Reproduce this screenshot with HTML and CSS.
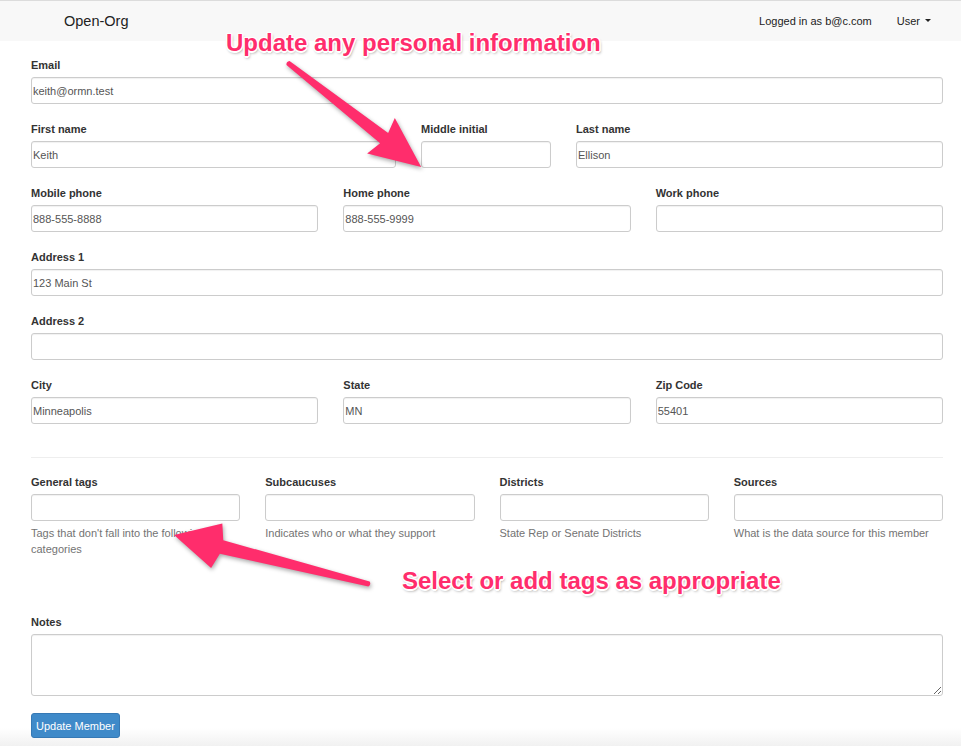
FILE: index.html
```html
<!DOCTYPE html>
<html lang="en">
<head>
<meta charset="utf-8">
<title>Open-Org</title>
<link rel="stylesheet" href="styles.css">
</head>
<body>
<nav class="navbar">
  <div class="brand">Open-Org</div>
  <div class="nav-right">
    <span class="logged">Logged in as b@c.com</span>
    <span class="user">User <span class="caret"></span></span>
  </div>
</nav>

<main class="page">
  <div class="group">
    <label class="lbl">Email</label>
    <input class="ctl" type="text" value="keith@ormn.test">
  </div>

  <div class="row row-name">
    <div class="group"><label class="lbl">First name</label><input class="ctl" type="text" value="Keith"></div>
    <div class="group"><label class="lbl">Middle initial</label><input class="ctl" type="text" value=""></div>
    <div class="group"><label class="lbl">Last name</label><input class="ctl" type="text" value="Ellison"></div>
  </div>

  <div class="row row-3">
    <div class="group"><label class="lbl">Mobile phone</label><input class="ctl" type="text" value="888-555-8888"></div>
    <div class="group"><label class="lbl">Home phone</label><input class="ctl" type="text" value="888-555-9999"></div>
    <div class="group"><label class="lbl">Work phone</label><input class="ctl" type="text" value=""></div>
  </div>

  <div class="group">
    <label class="lbl">Address 1</label>
    <input class="ctl" type="text" value="123 Main St">
  </div>

  <div class="group">
    <label class="lbl">Address 2</label>
    <input class="ctl" type="text" value="">
  </div>

  <div class="row row-3">
    <div class="group"><label class="lbl">City</label><input class="ctl" type="text" value="Minneapolis"></div>
    <div class="group"><label class="lbl">State</label><input class="ctl" type="text" value="MN"></div>
    <div class="group"><label class="lbl">Zip Code</label><input class="ctl" type="text" value="55401"></div>
  </div>

  <hr class="sep">

  <div class="row row-4 tags">
    <div class="group"><label class="lbl">General tags</label><input class="ctl" type="text" value=""><p class="help">Tags that don't fall into the following categories</p></div>
    <div class="group"><label class="lbl">Subcaucuses</label><input class="ctl" type="text" value=""><p class="help">Indicates who or what they support</p></div>
    <div class="group"><label class="lbl">Districts</label><input class="ctl" type="text" value=""><p class="help">State Rep or Senate Districts</p></div>
    <div class="group"><label class="lbl">Sources</label><input class="ctl" type="text" value=""><p class="help">What is the data source for this member</p></div>
  </div>

  <div class="group notes">
    <label class="lbl">Notes</label>
    <textarea class="ctl area"></textarea>
  </div>

  <button class="btn" type="button">Update Member</button>
</main>

<svg class="arrows" width="961" height="746" viewBox="0 0 961 746" aria-hidden="true">
  <g transform="translate(288 63) rotate(38)">
    <path class="arrow" d="M0,-2.5 L122,-6.5 L118,-22.5 L169,0 L118,22.5 L122,6.5 L0,2.5 Q-2.5,0 0,-2.5 Z"/>
  </g>
  <g transform="translate(369 584) rotate(194.1)">
    <path class="arrow" d="M0,-2.5 L152,-7 L157,-23 L201,0 L157,23 L152,7 L0,2.5 Q-2.5,0 0,-2.5 Z"/>
  </g>
</svg>
<div class="note note-top">Update any personal information</div>
<div class="note note-bottom">Select or add tags as appropriate</div>
</body>
</html>
```

FILE: styles.css
```css
* { box-sizing: border-box; }

html, body {
  margin: 0;
  padding: 0;
}

body {
  font-family: "Liberation Sans", Helvetica, Arial, sans-serif;
  font-size: 11px;
  color: #333;
  min-height: 746px;
  background: linear-gradient(to bottom, #fff 0, #fff 728px, #f1f1f1 746px);
  position: relative;
}

.navbar {
  height: 41px;
  background: #f8f8f8;
  border-top: 1px solid #dcdcdc;
  display: flex;
  align-items: center;
  justify-content: space-between;
  padding: 0 30px 0 64px;
}

.brand {
  font-size: 14.5px;
  color: #222;
  margin-top: -1px;
}

.nav-right {
  display: flex;
  align-items: center;
  font-size: 11px;
  color: #222;
  margin-top: -1px;
}

.logged { margin-right: 25px; }

.user { display: inline-flex; align-items: center; }

.caret {
  display: inline-block;
  width: 0;
  height: 0;
  margin-left: 5px;
  border-top: 3px solid #222;
  border-left: 3px solid transparent;
  border-right: 3px solid transparent;
}

.page {
  padding: 17px 18px 0 31px;
}

.group {
  display: flex;
  flex-direction: column;
  margin-bottom: 18px;
}

.row .group { margin-bottom: 0; }

.row {
  display: grid;
  column-gap: 25px;
  margin-bottom: 18px;
}

.row-name { grid-template-columns: 365px 130px 1fr; }
.row-3 { grid-template-columns: 1fr 1fr 1fr; }
.row-4 { grid-template-columns: 1fr 1fr 1fr 1fr; }

.lbl {
  display: block;
  font-weight: bold;
  font-size: 11px;
  line-height: 14px;
  color: #333;
  margin-bottom: 5px;
}

.ctl {
  display: block;
  width: 100%;
  height: 27px;
  margin: 0;
  padding: 0 0 0 1px;
  font-family: "Liberation Sans", Helvetica, Arial, sans-serif;
  font-size: 11px;
  color: #555;
  background: #fff;
  border: 1px solid #ccc;
  border-radius: 3px;
  box-shadow: inset 0 1px 1px rgba(0,0,0,0.06);
  outline: none;
}

.area {
  height: 62px;
  resize: vertical;
}

.help {
  margin: 4px 0 0;
  font-size: 11px;
  line-height: 16px;
  color: #737373;
}

.sep {
  border: 0;
  border-top: 1px solid #eee;
  margin: 33px 0 17px;
  height: 0;
}

.tags { margin-bottom: 58px; }

.notes { margin-bottom: 17px; }

.btn {
  display: block;
  height: 25px;
  padding: 0 4px;
  font-family: "Liberation Sans", Helvetica, Arial, sans-serif;
  font-size: 11px;
  color: #fff;
  background: #3f8ac9;
  border: 1px solid #3679b5;
  border-radius: 3px;
  cursor: pointer;
}

.arrows {
  position: absolute;
  left: 0;
  top: 0;
  pointer-events: none;
  filter: drop-shadow(1px 2px 2px rgba(0,0,0,0.35));
}

.arrow { fill: #ff2d6c; }

.note {
  position: absolute;
  font-family: "Liberation Sans", Helvetica, Arial, sans-serif;
  font-weight: bold;
  font-size: 24px;
  line-height: 28px;
  color: #ff2d6c;
  white-space: nowrap;
  text-shadow:
    -1px -1px 0 #fff, 1px -1px 0 #fff, -1px 1px 0 #fff, 1px 1px 0 #fff,
    0 -1.5px 0 #fff, 0 1.5px 0 #fff, -1.5px 0 0 #fff, 1.5px 0 0 #fff,
    1px 2px 3px rgba(0,0,0,0.45);
}

.note-top { left: 226px; top: 29px; }
.note-bottom { left: 402px; top: 567px; }
```
